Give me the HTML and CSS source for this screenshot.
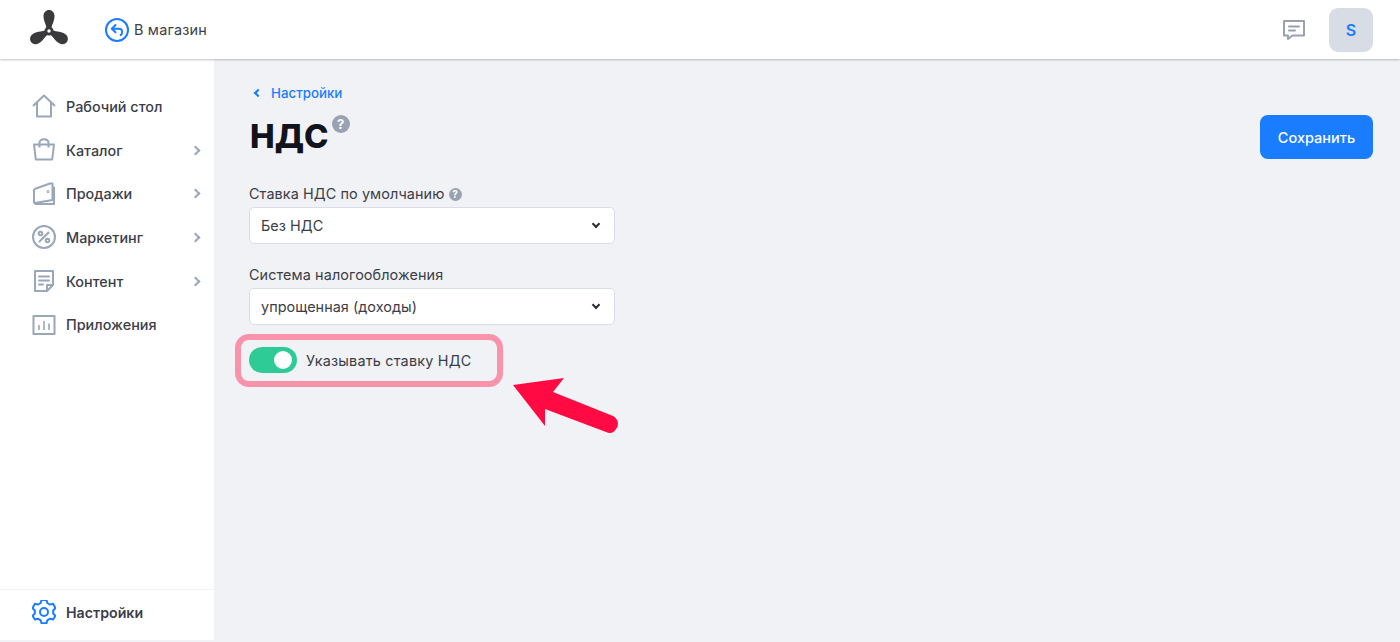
FILE: index.html
```html
<!DOCTYPE html>
<html lang="ru">
<head>
    <meta charset="UTF-8">
    <title>НДС</title>
    <link rel="stylesheet" href="styles.css">
</head>
<body>
<header class="topbar">
    <svg class="logo" width="40" height="40" viewBox="0 0 40 40" fill="#3a3a3c">
        <path d="M18 20C17.500 15 14.500 11.500 14.500 6 14.500 2.500 17 0 20 0s5.500 2.500 5.500 6C25.500 11.500 22.500 15 22 20z"/>
        <path d="M18 20C17.500 15 14.500 11.500 14.500 6 14.500 2.500 17 0 20 0s5.500 2.500 5.500 6C25.500 11.500 22.500 15 22 20z" transform="rotate(120 20 21)"/>
        <path d="M18 20C17.500 15 14.500 11.500 14.500 6 14.500 2.500 17 0 20 0s5.500 2.500 5.500 6C25.500 11.500 22.500 15 22 20z" transform="rotate(240 20 21)"/>
        <circle cx="20" cy="21" r="4.500"/>
        <circle cx="20" cy="21" r="1.700" fill="#fff"/>
    </svg>
    <a class="back-shop">
        <svg width="24" height="24" viewBox="0 0 24 24" fill="none" stroke="#1a7cff">
            <circle cx="12" cy="12" r="11" stroke-width="2"/>
            <path stroke-width="2" stroke-linecap="round" stroke-linejoin="round" d="M10.500 7 6.800 10.700l3.700 3.600M7.200 10.700h6.300c2.200 0 3.700 1.500 3.700 3.400 0 1.300-.6 2.300-1.500 3"/>
        </svg>
        В магазин
    </a>
    <div class="topbar-right">
        <svg width="24" height="24" viewBox="0 0 24 24" fill="none" stroke="#9aa1ae" stroke-width="2">
            <path stroke-linejoin="round" d="M2 3h20v14.500H10.500L6 21v-3.500H2z"/>
            <path stroke-linecap="round" d="M7 8.500h10M7 12.500h6"/>
        </svg>
        <div class="avatar">S</div>
    </div>
</header>

<div class="layout">
    <aside class="sidebar">
        <nav class="menu">
            <a class="menu-item">
                <svg width="24" height="24" viewBox="0 0 24 24" fill="none" stroke="#9aa6b9" stroke-width="2" stroke-linejoin="round">
                    <path d="M1 12 12 1.500 23 12M5 9v13.500h14V9"/>
                </svg>
                Рабочий стол
            </a>
            <a class="menu-item">
                <svg width="24" height="24" viewBox="0 0 24 24" fill="none" stroke="#9aa6b9" stroke-width="2" stroke-linejoin="round">
                    <path d="M2 6.500h20l-1.800 15H3.800zM7.500 9.500V5c0-2.200 1.800-3.800 4.500-3.800s4.500 1.600 4.500 3.800v4.500"/>
                </svg>
                Каталог
                <span class="chevron"></span>
            </a>
            <a class="menu-item">
                <svg width="24" height="24" viewBox="0 0 24 24" fill="none" stroke="#9aa6b9" stroke-width="2" stroke-linejoin="round">
                    <path d="M2.500 7 18 1.500h2.500v4M20.500 5.500H22V22H3.500L2 20.500V7M3 21l17.500-3V5.500"/>
                    <circle cx="16" cy="9.500" r=".5"/>
                </svg>
                Продажи
                <span class="chevron"></span>
            </a>
            <a class="menu-item">
                <svg width="24" height="24" viewBox="0 0 24 24" fill="none" stroke="#9aa6b9" stroke-width="2" stroke-linecap="round">
                    <circle cx="12" cy="12" r="11"/>
                    <path d="M16.500 7.500 7.500 16.500"/>
                    <circle cx="8.500" cy="8.500" r="1.800"/>
                    <circle cx="15.500" cy="15.500" r="1.800"/>
                </svg>
                Маркетинг
                <span class="chevron"></span>
            </a>
            <a class="menu-item">
                <svg width="24" height="24" viewBox="0 0 24 24" fill="none" stroke="#9aa6b9" stroke-width="2" stroke-linejoin="round">
                    <path d="M15 22H3V2h18v14zM15 22v-6h6"/>
                    <path stroke-linecap="round" d="M7 7.500h10M7 11.500h10M7 15.500h4"/>
                </svg>
                Контент
                <span class="chevron"></span>
            </a>
            <a class="menu-item">
                <svg width="24" height="24" viewBox="0 0 24 24" fill="none" stroke="#9aa6b9" stroke-width="2">
                    <path stroke-linejoin="round" d="M1.500 3h21v18h-21z"/>
                    <path stroke-width="1.600" d="M7 12v5M12 8v9M17 10.500V17"/>
                </svg>
                Приложения
            </a>
        </nav>
        <a class="menu-item settings-item">
            <svg width="24" height="24" viewBox="0 0 24 24" fill="none" stroke="#1a7cff" stroke-width="2" stroke-linejoin="round">
                <path d="M9.500 1.500h5l.8 3 2.800 1.600 3-.8 2.300 4.300-2.200 2.400v3l2.200 2.400-2.300 3.600-3-.8-2.800 1.600-.8 3h-5l-.8-3-2.800-1.600-3 .8L.600 17.400l2.200-2.400v-3L.600 9.600 2.900 5.300l3 .8 2.800-1.600z" transform="translate(0 -1.500)"/>
                <circle cx="12" cy="12" r="4"/>
            </svg>
            Настройки
        </a>
    </aside>

    <main class="content">
        <div class="content-head">
            <div>
                <a class="crumb"><span class="crumb-arrow"></span>Настройки</a>
                <h1>НДС<span class="hint hint-big">?</span></h1>
            </div>
            <button class="save-btn">Сохранить</button>
        </div>

        <div class="field">
            <label>Ставка НДС по умолчанию <span class="hint">?</span></label>
            <div class="select">Без НДС<span class="select-arrow"></span></div>
        </div>
        <div class="field">
            <label>Система налогообложения</label>
            <div class="select">упрощенная (доходы)<span class="select-arrow"></span></div>
        </div>

        <div class="toggle-row">
            <span class="toggle"></span>
            Указывать ставку НДС
            <div class="highlight"></div>
            <svg class="pointer" width="110" height="65" viewBox="0 0 110 65">
                <path fill="#ff0a43" d="M4 13 55 6 44 20 104 44C110 47 110 54 107 57 105 61 101 62 97 60L36 37 36 54z"/>
            </svg>
        </div>
    </main>
</div>
</body>
</html>
```

FILE: styles.css
```css
* {
    box-sizing: border-box;
}
html, body {
    height: 100%;
}
body {
    margin: 0;
    font-family: Inter, "Noto Sans", sans-serif;
    color: #3b3d47;
    background: #f1f2f5;
    display: flex;
    flex-direction: column;
    overflow: hidden;
}

.topbar {
    height: 59px;
    flex: none;
    background: white;
    box-shadow: 0 1px 2px rgba(0,0,0,0.25);
    display: flex;
    align-items: center;
    padding: 0 27px 0 29px;
    position: relative;
    z-index: 2;
}
.back-shop {
    display: flex;
    align-items: center;
    gap: 5px;
    margin-left: 36px;
    font-size: 14.400px;
    letter-spacing: 0.2px;
}
.topbar-right {
    margin-left: auto;
    display: flex;
    align-items: center;
    gap: 23px;
}
.avatar {
    width: 44px;
    height: 44px;
    border-radius: 9px;
    background: #d8dce5;
    color: #1a7cff;
    font-size: 16px;
    font-weight: 600;
    display: flex;
    align-items: center;
    justify-content: center;
}

.layout {
    flex: 1;
    display: flex;
    min-height: 0;
    padding-bottom: 2px;
}
.sidebar {
    width: 214px;
    flex: none;
    background: white;
    display: flex;
    flex-direction: column;
}
.menu {
    flex: 1;
    padding-top: 25.500px;
}
.menu-item {
    height: 43.700px;
    padding: 0 12px 0 32px;
    display: flex;
    align-items: center;
    gap: 10px;
    font-size: 14.400px;
    font-weight: 500;
}
.chevron {
    margin-left: auto;
    width: 7px;
    height: 7px;
    border-top: 2px solid #9aa6b9;
    border-right: 2px solid #9aa6b9;
    transform: rotate(45deg);
    margin-right: 3px;
}
.settings-item {
    height: 45px;
    margin-bottom: 6px;
    border-top: 1px solid #f1f2f5;
    font-size: 14.200px;
    font-weight: 600;
}

.content {
    flex: 1;
    padding: 25px 27px 0 35px;
}
.content-head {
    display: flex;
    justify-content: space-between;
    align-items: flex-start;
}
.crumb {
    display: flex;
    align-items: center;
    color: #1a7cff;
    font-size: 13.300px;
    font-weight: 500;
    height: 17px;
}
.crumb-arrow {
    width: 6px;
    height: 6px;
    border-left: 2px solid #1a7cff;
    border-bottom: 2px solid #1a7cff;
    transform: rotate(45deg);
    margin: 0 10px 0 6px;
}
h1 {
    margin: 12px 0 0;
    height: 72px;
    font-size: 33px;
    font-weight: 800;
    line-height: 46px;
    color: #11141c;
    display: flex;
    align-items: flex-start;
    padding-left: 1px;
}
.hint {
    display: inline-block;
    width: 13px;
    height: 13px;
    border-radius: 50%;
    background: #9aa1b1;
    color: white;
    font-size: 10px;
    font-weight: 700;
    line-height: 13px;
    text-align: center;
    vertical-align: 1px;
}
.hint-big {
    width: 18px;
    height: 18px;
    font-size: 13px;
    line-height: 18px;
    margin: 2px 0 0 3px;
}
.save-btn {
    margin-top: 31px;
    width: 113px;
    height: 44px;
    background: #1a7cff;
    color: white;
    border: none;
    border-radius: 8px;
    font-family: inherit;
    font-size: 14.500px;
    font-weight: 500;
}

.field {
    width: 366px;
    margin-bottom: 22px;
}
.field label {
    display: block;
    font-size: 14.400px;
    line-height: 18px;
    margin-bottom: 4px;
    letter-spacing: 0.1px;
}
.select {
    height: 37px;
    background: white;
    border: 1px solid #d8dde8;
    border-radius: 5px;
    padding: 0 12px 1px 11px;
    display: flex;
    align-items: center;
    justify-content: space-between;
    font-size: 14.400px;
    letter-spacing: 0.05px;
}
.select-arrow {
    width: 6px;
    height: 6px;
    border-right: 2px solid #2c2e36;
    border-bottom: 2px solid #2c2e36;
    transform: rotate(45deg);
    margin: -2px 3px 0 0;
}

.toggle-row {
    position: relative;
    display: flex;
    align-items: center;
    gap: 9px;
    font-size: 14.400px;
    letter-spacing: 0.2px;
    height: 26px;
}
.toggle {
    width: 48px;
    height: 26px;
    border-radius: 13px;
    background: #2fcb97;
    position: relative;
}
.toggle::after {
    content: "";
    position: absolute;
    right: 5px;
    top: 4px;
    width: 18px;
    height: 18px;
    border-radius: 50%;
    background: white;
}
.highlight {
    position: absolute;
    left: -14px;
    top: -13px;
    width: 268px;
    height: 53px;
    border: 6px solid #f993ab;
    border-radius: 14px;
}
.pointer {
    position: absolute;
    left: 260px;
    top: 25px;
    overflow: visible;
}
```
